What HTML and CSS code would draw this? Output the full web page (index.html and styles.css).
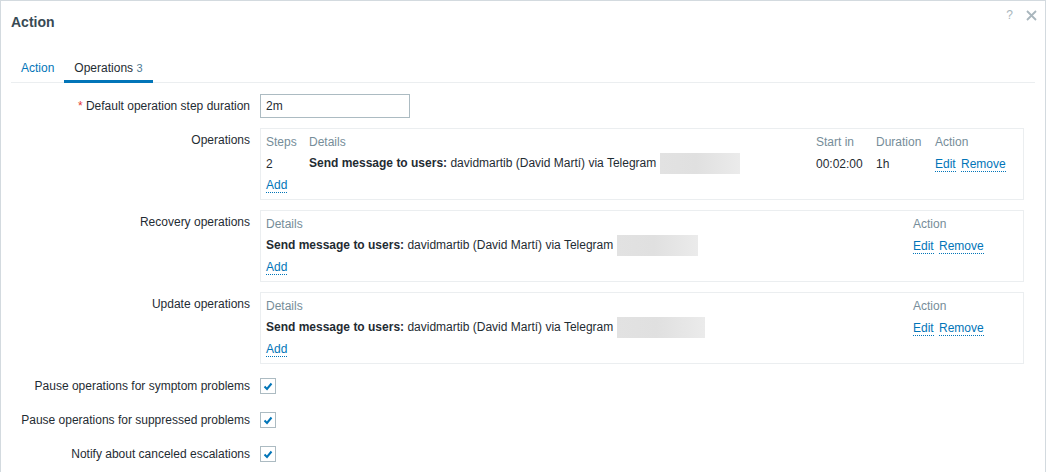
FILE: index.html
```html
<!DOCTYPE html>
<html lang="en">

<head>
    <meta charset="UTF-8">
    <title>Action</title>
    <link rel="stylesheet" href="styles.css">
</head>

<body>
    <div class="dialog">
        <div class="dialog-head">
            <h4>Action</h4>
            <div class="head-btns">
                <span class="help">?</span>
                <svg class="close" width="11" height="11" viewBox="0 0 11 11">
                    <path d="M1 1 L10 10 M10 1 L1 10" stroke="#a9b6bd" stroke-width="1.8" fill="none"/>
                </svg>
            </div>
        </div>

        <ul class="tabs">
            <li>Action</li>
            <li class="active">Operations <span class="count">3</span></li>
        </ul>

        <div class="form">
            <div class="lbl"><span class="req">*</span> Default operation step duration</div>
            <div><input class="text-input" type="text" value="2m"></div>

            <div class="lbl">Operations</div>
            <div class="box">
                <div class="grid ops">
                    <div class="th">Steps</div>
                    <div class="th">Details</div>
                    <div class="th">Start in</div>
                    <div class="th">Duration</div>
                    <div class="th">Action</div>

                    <div>2</div>
                    <div><b>Send message to users:</b> davidmartib (David Martí) via Telegram <span class="redact" style="width: 80px"></span></div>
                    <div>00:02:00</div>
                    <div>1h</div>
                    <div><a class="link">Edit</a> <a class="link">Remove</a></div>

                    <div class="add-row"><a class="link">Add</a></div>
                </div>
            </div>

            <div class="lbl">Recovery operations</div>
            <div class="box">
                <div class="grid simple">
                    <div class="th">Details</div>
                    <div class="th">Action</div>

                    <div><b>Send message to users:</b> davidmartib (David Martí) via Telegram <span class="redact" style="width: 81px"></span></div>
                    <div><a class="link">Edit</a> <a class="link">Remove</a></div>

                    <div class="add-row"><a class="link">Add</a></div>
                </div>
            </div>

            <div class="lbl">Update operations</div>
            <div class="box">
                <div class="grid simple">
                    <div class="th">Details</div>
                    <div class="th">Action</div>

                    <div><b>Send message to users:</b> davidmartib (David Martí) via Telegram <span class="redact" style="width: 88px"></span></div>
                    <div><a class="link">Edit</a> <a class="link">Remove</a></div>

                    <div class="add-row"><a class="link">Add</a></div>
                </div>
            </div>

            <div class="lbl">Pause operations for symptom problems</div>
            <div class="check-cell"><span class="checkbox"><svg width="14" height="14" viewBox="0 0 14 14"><path d="M3.5 7.5 L6 10 L10.5 4.5" stroke="#0275b8" stroke-width="2" fill="none"/></svg></span></div>

            <div class="lbl">Pause operations for suppressed problems</div>
            <div class="check-cell"><span class="checkbox"><svg width="14" height="14" viewBox="0 0 14 14"><path d="M3.5 7.5 L6 10 L10.5 4.5" stroke="#0275b8" stroke-width="2" fill="none"/></svg></span></div>

            <div class="lbl">Notify about canceled escalations</div>
            <div class="check-cell"><span class="checkbox"><svg width="14" height="14" viewBox="0 0 14 14"><path d="M3.5 7.5 L6 10 L10.5 4.5" stroke="#0275b8" stroke-width="2" fill="none"/></svg></span></div>
        </div>
    </div>
</body>

</html>
```

FILE: styles.css
```css
body {
    margin: 0;
    padding: 0;
    background-color: #ffffff;
    font-family: "Liberation Sans", Arial, sans-serif;
    font-size: 12px;
    color: #1f2c33;
}

.dialog {
    border: 1px solid #d3dadf;
    border-bottom: none;
    min-height: 500px;
    padding: 0 10px;
}

.dialog-head {
    display: flex;
    justify-content: space-between;
    align-items: flex-start;
    padding: 13px 0 23px 0;
}

.dialog-head h4 {
    margin: 0;
    font-size: 14px;
    line-height: 16px;
    font-weight: bold;
    color: #384a54;
}

.head-btns {
    display: flex;
    align-items: center;
    gap: 13px;
    margin-top: -5px;
    margin-right: -2px;
}

.help {
    font-size: 12px;
    line-height: 12px;
    color: #a9b6bd;
}

.close {
    display: block;
}

.tabs {
    list-style: none;
    margin: 0;
    padding: 0;
    display: flex;
    border-bottom: 1px solid #ebeef0;
}

.tabs li {
    padding: 8px 10px 5px;
    line-height: 14px;
    color: #0275b8;
    border-bottom: 3px solid transparent;
    margin-bottom: -1px;
}

.tabs li.active {
    color: #1f2c33;
    border-bottom-color: #0275b8;
}

.count {
    font-size: 11px;
    color: #4f7a94;
}

.form {
    display: grid;
    grid-template-columns: 239px 1fr;
    column-gap: 10px;
    row-gap: 10px;
    margin-top: 11px;
    padding-right: 11px;
}

.lbl {
    text-align: right;
    padding-top: 5px;
    line-height: 14px;
}

.req {
    color: #e33734;
}

.text-input {
    box-sizing: border-box;
    width: 150px;
    height: 24px;
    border: 1px solid #acbbc2;
    padding: 0 5px;
    font-family: inherit;
    font-size: 12px;
    color: #1f2c33;
    margin: 0;
    display: block;
}

.box {
    border: 1px solid #ebeef0;
    padding: 3px 5px 3px;
}

.grid {
    display: grid;
    grid-template-rows: 21px 21px 22px;
    align-items: center;
    line-height: 14px;
    white-space: nowrap;
}

.grid.ops {
    grid-template-columns: 43px minmax(0, 1fr) 60px 59px 83px;
}

.grid.simple {
    grid-template-columns: minmax(0, 1fr) 105px;
}

.th {
    color: #768d99;
    margin-top: -1px;
}

.add-row {
    grid-column: 1 / -1;
    display: flex;
    align-items: center;
}

.link {
    color: #0275b8;
    border-bottom: 1px dotted #0275b8;
    cursor: pointer;
}

.link + .link {
    margin-left: 2px;
}

.redact {
    display: inline-block;
    height: 21px;
    vertical-align: middle;
    margin-left: 0;
    background: linear-gradient(90deg, #e2e2e2, #e0e0e0 45%, #ebebeb);
}

.check-cell {
    height: 24px;
    display: flex;
    align-items: center;
}

.checkbox {
    box-sizing: border-box;
    width: 16px;
    height: 16px;
    border: 1px solid #acbbc2;
    display: flex;
    align-items: center;
    justify-content: center;
    background-color: #ffffff;
}
```
